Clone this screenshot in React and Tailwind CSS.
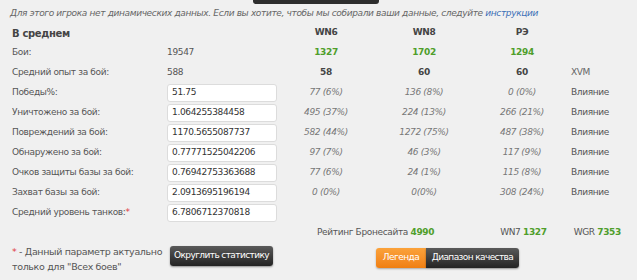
import React from "react";

const rows = [
  { label: "Победы%:", value: "51.75", wn6: "77 (6%)", wn8: "136 (8%)", re: "0 (0%)" },
  { label: "Уничтожено за бой:", value: "1.064255384458", wn6: "495 (37%)", wn8: "224 (13%)", re: "266 (21%)" },
  { label: "Повреждений за бой:", value: "1170.5655087737", wn6: "582 (44%)", wn8: "1272 (75%)", re: "487 (38%)" },
  { label: "Обнаружено за бой:", value: "0.77771525042206", wn6: "97 (7%)", wn8: "46 (3%)", re: "117 (9%)" },
  { label: "Очков защиты базы за бой:", value: "0.76942753363688", wn6: "77 (6%)", wn8: "24 (1%)", re: "115 (8%)" },
  { label: "Захват базы за бой:", value: "2.0913695196194", wn6: "0 (0%)", wn8: "0(0%)", re: "308 (24%)" },
];

function Row({ children }) {
  return <div className="flex h-5 items-center">{children}</div>;
}

function Label({ children }) {
  return <div className="w-[155px] shrink-0 text-[#555]">{children}</div>;
}

function Input({ value }) {
  return (
    <div className="w-[110px] h-[18px] shrink-0 bg-white border border-[#dcdcdc] rounded-[3px] px-[4px] flex items-center text-[#333]">
      {value}
    </div>
  );
}

function Cell({ children, className = "" }) {
  return <div className={`w-[98px] shrink-0 text-center ${className}`}>{children}</div>;
}

export default function App() {
  return (
    <div
      className="w-[637px] h-[280px] bg-[#f0f0f0] text-[9px] tracking-[-0.35px] whitespace-nowrap overflow-hidden"
      style={{ fontFamily: '"DejaVu Sans", Verdana, sans-serif' }}
    >
      <div className="ml-[253px] w-[126px] h-1 rounded-b-[3px] bg-[#2e2e2e]" />
      <div className="mt-[2px] h-[14px] leading-[14px] pl-[10px] italic text-[#666]">
        Для этого игрока нет динамических данных. Если вы хотите, чтобы мы собирали ваши данные, следуйте{" "}
        <span className="text-[#3b6fb6]">инструкции</span>
      </div>

      <div className="mt-[3px] pl-3">
        <Row>
          <div className="w-[265px] shrink-0 font-bold text-[10px] text-[#444]">В среднем</div>
          <Cell className="font-bold text-[#444]">WN6</Cell>
          <Cell className="font-bold text-[#444]">WN8</Cell>
          <Cell className="font-bold text-[#444]">РЭ</Cell>
        </Row>
        <Row>
          <Label>Бои:</Label>
          <div className="w-[110px] shrink-0 text-[#555]">19547</div>
          <Cell className="font-bold text-[#4f9e2b]">1327</Cell>
          <Cell className="font-bold text-[#4f9e2b]">1702</Cell>
          <Cell className="font-bold text-[#4f9e2b]">1294</Cell>
        </Row>
        <Row>
          <Label>Средний опыт за бой:</Label>
          <div className="w-[110px] shrink-0 text-[#555]">588</div>
          <Cell className="font-bold text-[#444]">58</Cell>
          <Cell className="font-bold text-[#444]">60</Cell>
          <Cell className="font-bold text-[#444]">60</Cell>
          <div className="text-[#666]">XVM</div>
        </Row>
        {rows.map((r) => (
          <Row key={r.label}>
            <Label>{r.label}</Label>
            <Input value={r.value} />
            <Cell className="italic text-[#777]">{r.wn6}</Cell>
            <Cell className="italic text-[#777]">{r.wn8}</Cell>
            <Cell className="italic text-[#777]">{r.re}</Cell>
            <div className="text-[#555]">Влияние</div>
          </Row>
        ))}
        <Row>
          <Label>
            Средний уровень танков:<span className="text-[#e0393e]">*</span>
          </Label>
          <Input value="6.7806712370818" />
        </Row>
        <Row>
          <div className="ml-[305px] shrink-0 text-[#555]">
            Рейтинг Бронесайта <span className="font-bold text-[#4f9e2b]">4990</span>
          </div>
          <div className="ml-[66px] shrink-0 text-[#555]">
            WN7 <span className="font-bold text-[#4f9e2b]">1327</span>
          </div>
          <div className="ml-[27px] shrink-0 text-[#555]">
            WGR <span className="font-bold text-[#4f9e2b]">7353</span>
          </div>
        </Row>
      </div>

      <div className="flex pl-3 mt-[1px]">
        <div className="w-[158px] shrink-0 leading-[15px] text-[#555] text-[9.5px]">
          <span className="text-[#e0393e]">*</span> - Данный параметр актуально
          <br />
          только для "Всех боев"
        </div>
        <div className="pt-[2px] shrink-0">
          <div className="h-5 w-[103px] rounded-[3px] bg-gradient-to-b from-[#5a5a5a] to-[#242424] text-white tracking-[-0.6px] flex items-center justify-center shadow-[0_1px_2px_rgba(0,0,0,0.4)]">
            Округлить статистику
          </div>
        </div>
        <div className="ml-[103px] pt-[4px] flex shrink-0">
          <div className="h-5 w-[50px] rounded-l-[3px] bg-gradient-to-b from-[#fba23a] to-[#f07f10] text-white tracking-[-0.5px] flex items-center justify-center shadow-[0_1px_2px_rgba(0,0,0,0.3)]">
            Легенда
          </div>
          <div className="h-5 w-[93px] rounded-r-[3px] bg-gradient-to-b from-[#5a5a5a] to-[#242424] text-white tracking-[-0.6px] flex items-center justify-center shadow-[0_1px_2px_rgba(0,0,0,0.4)]">
            Диапазон качества
          </div>
        </div>
      </div>
    </div>
  );
}
